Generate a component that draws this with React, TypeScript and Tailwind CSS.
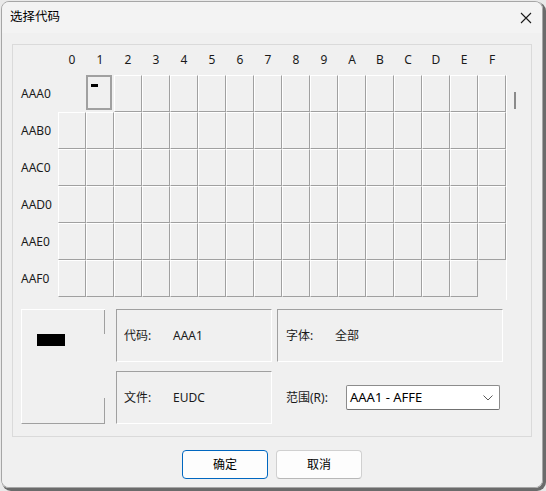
import React from 'react';

const cols = ['0', '1', '2', '3', '4', '5', '6', '7', '8', '9', 'A', 'B', 'C', 'D', 'E', 'F'];
const rows = ['AAA0', 'AAB0', 'AAC0', 'AAD0', 'AAE0', 'AAF0'];

const font = { fontFamily: '"Segoe UI", "Noto Sans", "Noto Sans CJK SC", sans-serif' };

function Cell({ row, col }: { row: number; col: number }) {
  // AAA0 and AFFF are not in the range
  if ((row === 0 && col === 0) || (row === 5 && col === 15)) {
    return <div className="w-[28px] h-[37px] shrink-0" />;
  }
  if (row === 0 && col === 1) {
    return (
      <div className="w-[28px] h-[37px] shrink-0">
        <div className="w-[26px] h-[35px] border-2 border-[#a0a0a0] pl-[3px] pt-[7px]">
          <div className="w-[7px] h-[3px] bg-black" />
        </div>
      </div>
    );
  }
  return (
    <div className="w-[28px] h-[37px] shrink-0 border border-t-white border-l-white border-r-[#a0a0a0] border-b-[#a0a0a0]" />
  );
}

function InfoBox({ label, value, className }: { label: string; value: string; className: string }) {
  return (
    <div
      className={`h-[53px] flex items-center border border-t-[#a0a0a0] border-l-[#a0a0a0] border-r-white border-b-white ${className}`}
    >
      <span className="w-[49px] shrink-0">{label}</span>
      <span>{value}</span>
    </div>
  );
}

export default function App() {
  return (
    <div className="w-[546px] h-[491px] bg-[#e9e9e9] pt-[1px] pl-[1px] overflow-hidden" style={font}>
      <div className="w-[542px] h-[487px] flex flex-col rounded-[8px] overflow-hidden border border-[#a6a6a6] shadow-[2px_2px_0_1px_#6b6b6b] text-[12px] text-[#1a1a1a]">
        <div className="h-[31px] shrink-0 bg-[#f3f3f3] flex items-center justify-between pl-[8px] pr-[9px]">
          <span className="text-[12.5px] text-black">选择代码</span>
          <svg width="12" height="12" viewBox="0 0 12 12" className="mr-[1px]">
            <path d="M1 1 L11 11 M11 1 L1 11" stroke="#1a1a1a" strokeWidth="1.1" fill="none" />
          </svg>
        </div>

        <div className="flex-1 bg-[#f0f0f0] pt-[11px] pl-[10px] flex flex-col">
          <div className="w-[520px] h-[393px] border border-[#dadada]">
            <div className="flex h-[30px] items-center">
              <div className="w-[45px] shrink-0" />
              {cols.map((c) => (
                <div key={c} className="w-[28px] shrink-0 text-center">
                  {c}
                </div>
              ))}
            </div>

            <div className="flex h-[222px]">
              <div className="flex flex-col">
                {rows.map((r, ri) => (
                  <div key={r} className="flex">
                    <div className="w-[45px] shrink-0 pl-[8px] flex items-center">{r}</div>
                    {cols.map((_, ci) => (
                      <Cell key={ci} row={ri} col={ci} />
                    ))}
                  </div>
                ))}
              </div>
              <div className="w-[24px] h-[225px] border-l border-white pl-[7px] pt-[17px]">
                <div className="w-[2px] h-[17px] bg-[#8a8a8a]" />
              </div>
            </div>

            <div className="flex mt-[12px] pl-[8px]">
              <div className="w-[84px] h-[115px] flex border-t border-l border-b border-t-white border-l-white border-b-[#a0a0a0]">
                <div className="flex-1 pl-[15px] pt-[24px]">
                  <div className="w-[28px] h-[12px] bg-black" />
                </div>
                <div className="w-[1px] flex flex-col">
                  <div className="h-[24px] bg-[#a0a0a0]" />
                  <div className="flex-1" />
                  <div className="h-[25px] bg-[#a0a0a0]" />
                </div>
              </div>

              <div className="ml-[11px] flex flex-col gap-[9px]">
                <div className="flex gap-[5px]">
                  <InfoBox label="代码:" value="AAA1" className="w-[156px] pl-[7px]" />
                  <InfoBox label="字体:" value="全部" className="w-[226px] pl-[8px]" />
                </div>
                <div className="flex gap-[5px]">
                  <InfoBox label="文件:" value="EUDC" className="w-[156px] pl-[7px]" />
                  <div className="w-[226px] h-[53px] flex items-center pl-[9px]">
                    <span className="w-[60px] shrink-0">范围(R):</span>
                    <div className="w-[154px] h-[25px] bg-white border border-[#8c8c8c] border-b-[#707070] rounded-[2px] flex items-center justify-between pl-[3px] pr-[6px]">
                      <span className="text-[13px] text-black">AAA1 - AFFE</span>
                      <svg width="10" height="6" viewBox="0 0 10 6">
                        <path d="M0.5 0.5 L5 5 L9.5 0.5" stroke="#5a5a5a" strokeWidth="1" fill="none" />
                      </svg>
                    </div>
                  </div>
                </div>
              </div>
            </div>
          </div>

          <div className="flex justify-center gap-[8px] mt-[13px] pr-[10px]">
            <button className="w-[86px] h-[29px] bg-[#fdfdfd] border border-[#0067c0] rounded-[4px] text-black">
              确定
            </button>
            <button className="w-[86px] h-[29px] bg-[#fdfdfd] border border-[#d0d0d0] border-b-[#b8b8b8] rounded-[4px] text-black">
              取消
            </button>
          </div>
        </div>
      </div>
    </div>
  );
}
